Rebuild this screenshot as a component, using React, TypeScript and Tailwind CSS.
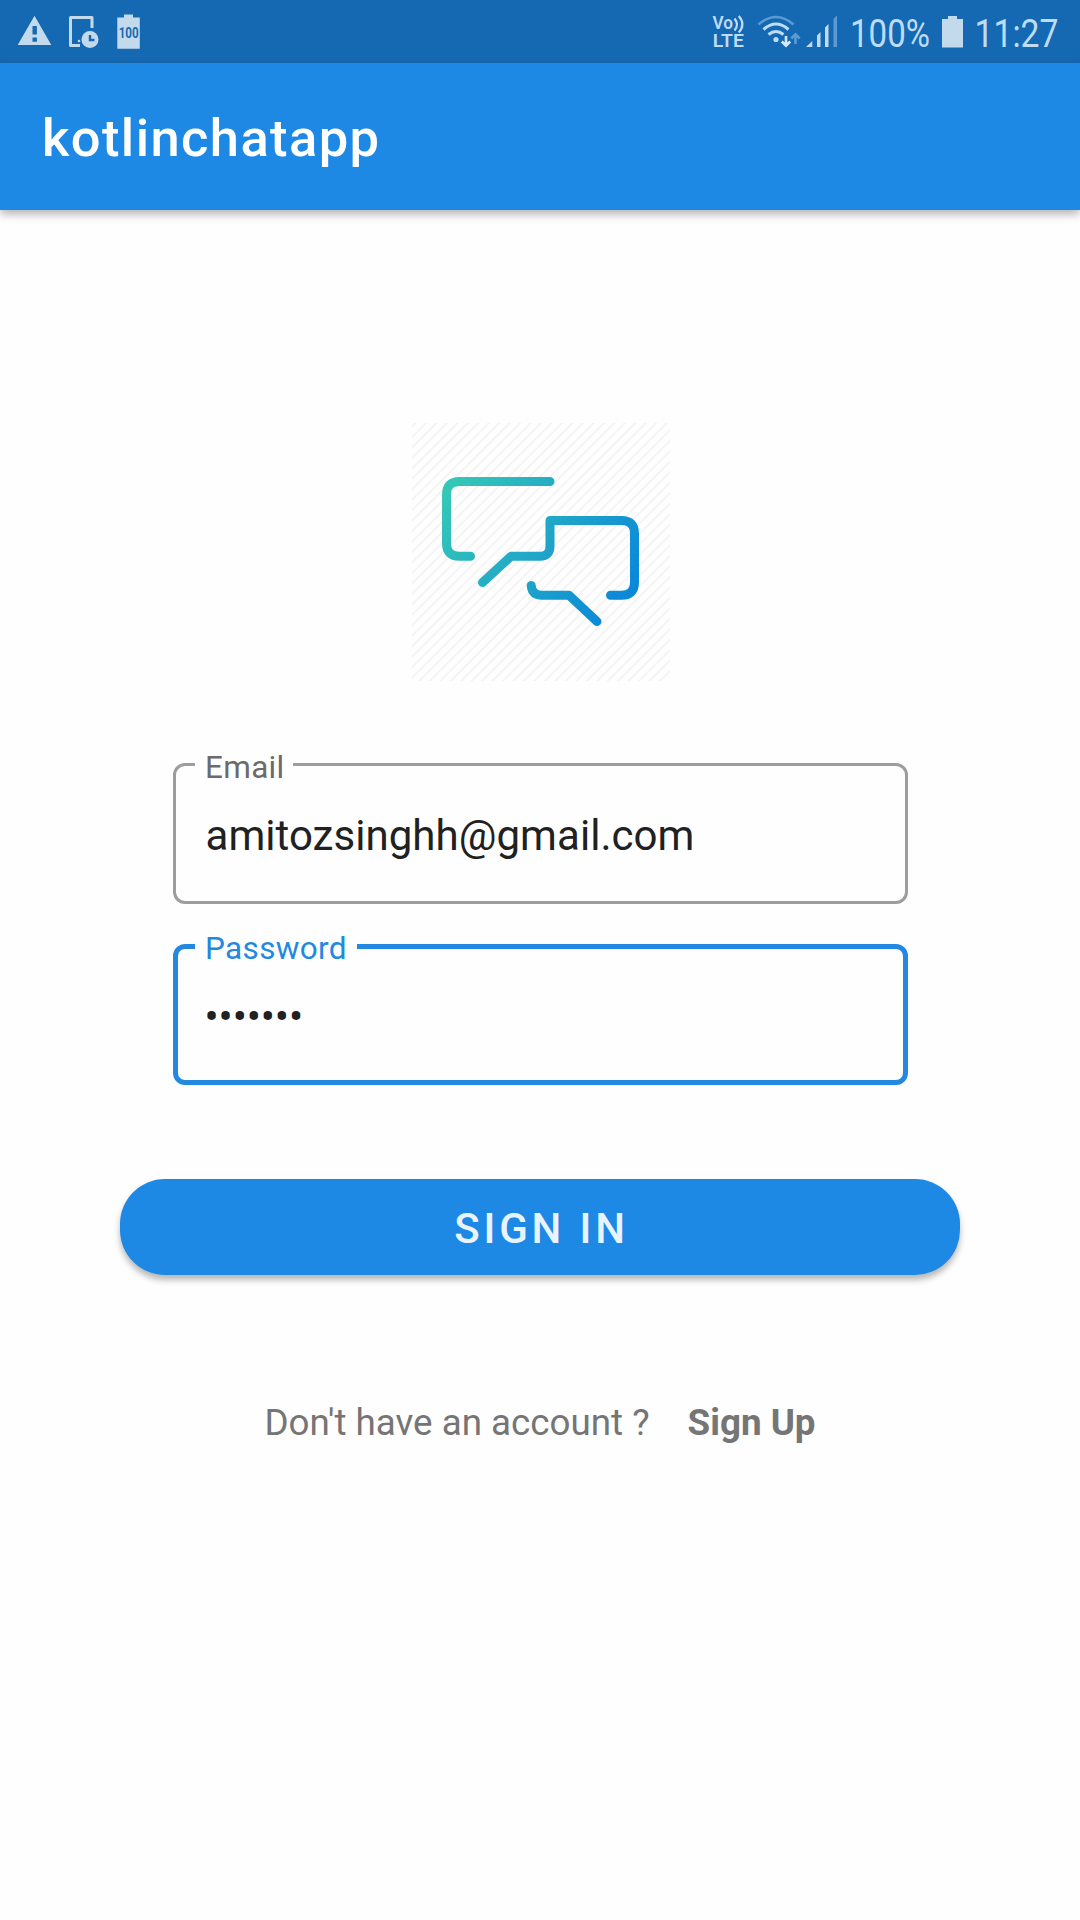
import React from "react";

const ink = "#c3d9ec";

function StatusBar() {
  return (
    <div className="flex h-[63px] items-center bg-[#1569b3] text-[#c8dff3]">
      <svg width="180" height="63" viewBox="0 0 180 63" fill={ink}>
        <path fillRule="evenodd" d="M34.500 15.800 51.300 45H17.700ZM32.500 26h4.400v8.500h-4.400ZM32.500 37.500h4.400v4.200h-4.400Z" />
        <path d="M92 28V17.500H70.500V45.500H80" fill="none" stroke={ink} strokeWidth="3" strokeLinejoin="round" />
        <circle cx="79" cy="41" r="1.300" />
        <circle cx="90" cy="39.500" r="8.500" />
        <path d="M90 35V40H94.500" fill="none" stroke="#1569b3" strokeWidth="2.400" />
        <path d="M117.300 17.500H124V14.500H133V17.500H139.800V48.700H117.300Z" />
        <text x="118.700" y="38.300" textLength="20" lengthAdjust="spacingAndGlyphs" fontSize="15" fontWeight="700" fill="#1569b3">100</text>
      </svg>
      <svg className="ml-auto" width="380" height="63" viewBox="700 0 380 63" fill="#bfdcf5">
        <text x="712.500" y="29" fontSize="18" fontWeight="600" textLength="20.500" lengthAdjust="spacingAndGlyphs">Vo</text>
        <path d="M734.500 18.500Q739.500 24.500 734.500 30.500M738.800 16Q746 24.500 738.800 32.500" fill="none" stroke="#bfdcf5" strokeWidth="2.200" />
        <text x="712.800" y="46.700" fontSize="18.500" fontWeight="600" textLength="31" lengthAdjust="spacingAndGlyphs">LTE</text>
        <g fill="none" stroke="#bfdcf5" strokeWidth="3">
          <path d="M758.500 24.500Q776 9.500 793.500 24.500" stroke="#5a9bd5" strokeWidth="2.600" />
          <path d="M763.500 29.500Q776 18.500 788.500 29.500" />
          <path d="M768.500 34.500Q776 28.500 783.500 34.500" />
        </g>
        <circle cx="776" cy="39.500" r="2.600" />
        <path d="M786 36V45.500M781.800 41.500 786 45.700 790.200 41.500" fill="none" stroke="#d5e9fa" strokeWidth="2.600" />
        <path d="M795.500 44V34.500M791.300 38.500 795.500 34.300 799.700 38.500" fill="none" stroke="#5a9bd5" strokeWidth="2.600" />
        <path d="M806 47 812.300 41V47ZM817 47V35.500L820.500 32V47ZM825 47V27.500L828.500 24V47Z" />
        <path d="M833.500 47V19L837 15.500V47Z" fill="#5a9bd5" />
        <text x="850" y="46.800" fontSize="38.500" textLength="80" lengthAdjust="spacingAndGlyphs">100%</text>
        <path d="M942 19H948V16H957V19H963V47.500H942Z" fill={ink} />
        <text x="974.500" y="46.800" fontSize="38.500" textLength="84" lengthAdjust="spacingAndGlyphs">11:27</text>
      </svg>
    </div>
  );
}

function Logo() {
  return (
    <svg className="mt-[213px] ml-[2px]" width="258" height="259" viewBox="412 423 258 259">
      <defs>
        <pattern id="stripes" width="7.400" height="7.400" patternUnits="userSpaceOnUse" patternTransform="rotate(45)">
          <rect width="2" height="7.400" fill="#f4f4f4" />
        </pattern>
        <linearGradient id="tone" gradientUnits="userSpaceOnUse" x1="447" y1="482" x2="632" y2="600">
          <stop offset="0" stopColor="#36c8b6" />
          <stop offset="1" stopColor="#0a86da" />
        </linearGradient>
      </defs>
      <rect x="412" y="423" width="258" height="258" fill="url(#stripes)" />
      <g fill="none" stroke="url(#tone)" strokeWidth="9" strokeLinecap="round" strokeLinejoin="round">
        <path d="M550 481.500H459.500Q446.500 481.500 446.500 494.500V543.300Q446.500 556.300 459.500 556.300H470.500" />
        <path d="M482.500 582.500 511 556.300H540Q550 556.300 550 546V520.500H621.500Q634.500 520.500 634.500 533.500V582.300Q634.500 595.300 621.500 595.300H610.500" />
        <path d="M531.200 585.500Q532 595.300 542 595.300H569L597 621.500" />
      </g>
    </svg>
  );
}

export default function App() {
  return (
    <div className="flex h-[1920px] w-[1080px] flex-col bg-[#fefefe] font-[Roboto,sans-serif]">
      <StatusBar />
      <header className="flex h-[147px] items-center bg-[#1e88e5] pt-[4px] pl-[42px] shadow-[0_4px_9px_rgba(0,0,0,0.3)]">
        <h1 className="text-[52.5px] font-medium tracking-[1.4px] text-white">kotlinchatapp</h1>
      </header>
      <main className="flex flex-col items-center">
        <Logo />
        <fieldset className="relative mt-[81px] h-[141px] w-[735px] rounded-[12px] border-[3px] border-[#9d9d9d]">
          <label className="absolute -top-[17px] left-[19px] bg-[#fefefe] pr-[9px] pl-[10.5px] text-[31.5px] leading-[37px] tracking-[0.3px] text-[#6b6b6b]">Email</label>
          <p className="mt-[45px] pl-[30px] text-[42px] leading-[50px] tracking-[0.05px] text-[#212121]">amitozsinghh@gmail.com</p>
        </fieldset>
        <fieldset className="relative mt-[40px] h-[141px] w-[735px] rounded-[12px] border-[5px] border-[#2288e0]">
          <label className="absolute -top-[19px] left-[17px] bg-[#fefefe] pr-[10px] pl-[10.5px] text-[31.5px] leading-[37px] tracking-[0.35px] text-[#2288e0]">Password</label>
          <p className="mt-[43px] pl-[27px] text-[42px] leading-[50px] tracking-[-0.1px] text-[#212121]">•••••••</p>
        </fieldset>
        <button className="mt-[94px] h-[96px] w-[840px] rounded-[45px] bg-[#1e88e5] pt-[2px] pl-[3px] text-[42px] font-medium tracking-[3.8px] text-[#e8f4fd] shadow-[0_5px_6px_rgba(0,0,0,0.28)]">SIGN IN</button>
        <div className="mt-[125px] flex gap-[38px] text-[36.75px] leading-[46px] text-[#757575]">
          <span>Don't have an account ?</span>
          <span className="font-bold">Sign Up</span>
        </div>
      </main>
    </div>
  );
}
